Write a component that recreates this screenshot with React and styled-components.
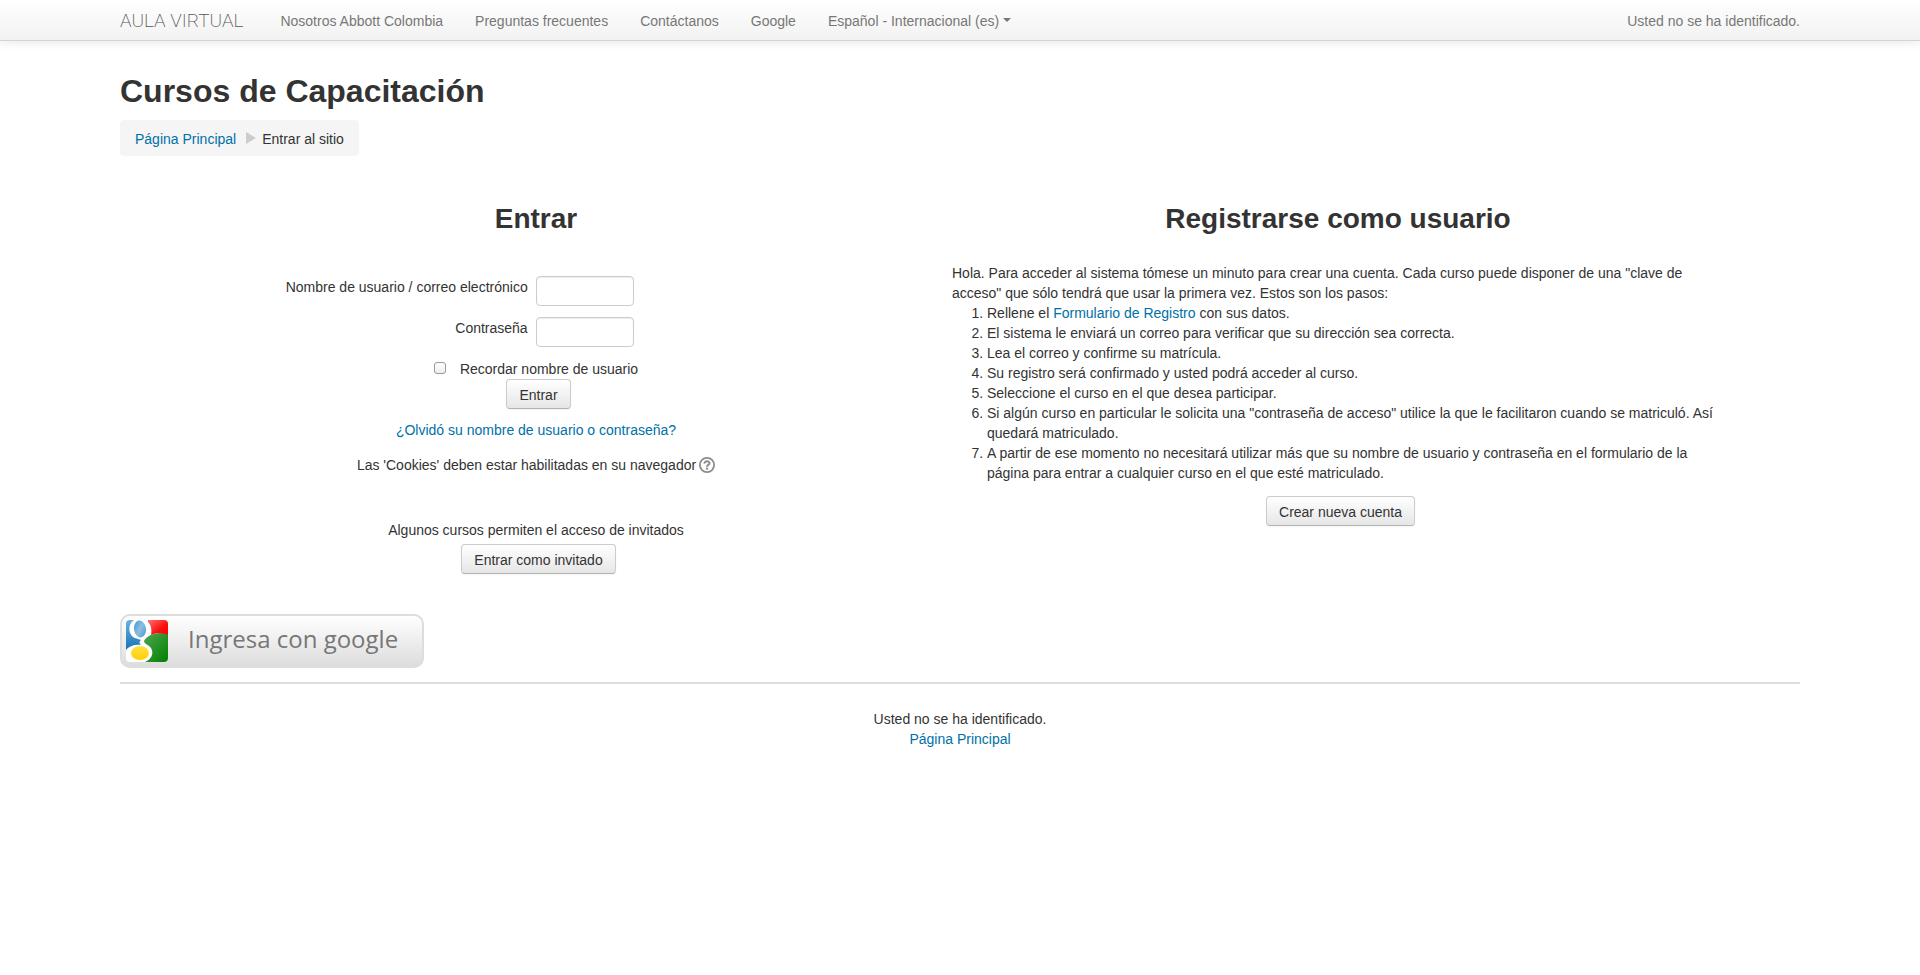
import React from "react";
import styled, { createGlobalStyle } from "styled-components";

const GlobalStyle = createGlobalStyle`
  *, *::before, *::after { box-sizing: border-box; }
  body {
    margin: 0;
    background: #fff;
    color: #333;
    font: 14px/20px "Liberation Sans", Arial, sans-serif;
  }
`;

const Navbar = styled.header`
  padding: 1px 120px 0;
  background: linear-gradient(#fff, #f2f2f2);
  border-bottom: 1px solid #d4d4d4;
  box-shadow: 0 1px 10px rgba(0, 0, 0, 0.1);
  display: flex;
  justify-content: space-between;
  align-items: center;
  height: 41px;
  color: #777;
`;

const NavGroup = styled.nav`
  display: flex;
  align-items: center;
  gap: 2px;
`;

const Brand = styled.a`
  margin-right: 20px;
  color: #555;
  font-family: Roboto, sans-serif;
  font-size: 19px;
  font-weight: 200;
  text-decoration: none;
`;

const NavLink = styled.a`
  padding: 10px 15px;
  color: #777;
  text-decoration: none;
`;

const Caret = styled.span`
  display: inline-block;
  margin-left: 4px;
  vertical-align: middle;
  border-top: 4px solid #777;
  border-left: 4px solid transparent;
  border-right: 4px solid transparent;
  margin-bottom: 4px;
`;

const Page = styled.div`
  padding: 30px 120px 40px;
`;

const SiteTitle = styled.h1`
  margin: 0 0 9px;
  font-size: 32px;
  line-height: 40px;
`;

const Link = styled.a`
  color: #0070a8;
  text-decoration: none;
`;

const Breadcrumb = styled.nav`
  display: inline-flex;
  align-items: center;
  padding: 9px 15px 7px;
  background: #f5f5f5;
  border-radius: 4px;
`;

const Separator = styled.span`
  margin: 0 6px 2px 10px;
  border-left: 10px solid #ccc;
  border-top: 6px solid transparent;
  border-bottom: 6px solid transparent;
`;

const Columns = styled.main`
  display: grid;
  grid-template-columns: 832fr 772fr 76fr;
  margin-top: 43px;
`;

const Panel = styled.section`
  display: flex;
  flex-direction: column;
  align-items: ${(p) => (p.$align === "start" ? "stretch" : "center")};
`;

const PanelTitle = styled.h2`
  margin: 0;
  font-size: 28px;
  line-height: 40px;
  text-align: center;
`;

const LoginForm = styled.form`
  display: flex;
  flex-direction: column;
  align-items: center;
  align-self: stretch;
  margin-top: 37px;
`;

const Field = styled.div`
  display: grid;
  grid-template-columns: 49% 98px;
  column-gap: 8px;
  align-self: stretch;
  margin-bottom: 11px;
  text-align: right;
`;

const FieldLabel = styled.label`
  padding-top: 1px;
`;

const TextInput = styled.input`
  width: 100%;
  height: 30px;
  padding: 4px 6px;
  border: 1px solid #ccc;
  border-radius: 4px;
  background: #fff;
  box-shadow: inset 0 1px 1px rgba(0, 0, 0, 0.075);
  font: inherit;
`;

const Remember = styled.label`
  display: flex;
  align-items: center;
  gap: 14px;
  margin-top: 1px;
`;

const Checkbox = styled.input`
  appearance: none;
  width: 12px;
  height: 12px;
  margin: 0 0 2px;
  border: 1px solid #999;
  border-radius: 3px;
  background: linear-gradient(#fff, #eee);
`;

const Button = styled.button`
  align-self: center;
  height: 30px;
  margin: ${(p) => p.$top || 0}px 0 0 5px;
  padding: 1px 12px 0;
  border: 1px solid #ccc;
  border-bottom-color: #b3b3b3;
  border-radius: 4px;
  background: linear-gradient(#fff, #e6e6e6);
  box-shadow: inset 0 1px 0 rgba(255, 255, 255, 0.2), 0 1px 2px rgba(0, 0, 0, 0.05);
  color: #333;
  font: inherit;
`;

const Forgot = styled(Link)`
  margin-top: 11px;
`;

const Cookies = styled.div`
  display: flex;
  align-items: center;
  gap: 3px;
  margin-top: 15px;
`;

const HelpButton = styled.button`
  display: flex;
  padding: 0;
  border: 0;
  background: none;
`;

const GuestForm = styled.form`
  display: flex;
  flex-direction: column;
  align-items: center;
  margin-top: 45px;
`;

const Instructions = styled.div`
  margin-top: 24px;
`;

const Steps = styled.ol`
  margin: 0;
  padding-left: 35px;
`;

const GoogleButton = styled.button`
  display: flex;
  align-items: center;
  height: 54px;
  margin-top: 40px;
  padding: 0 24px 0 4px;
  border: 2px solid #ddd;
  border-radius: 10px;
  background: linear-gradient(#fff, #ddd);
  color: #777;
  font: 24px/32px "Open Sans", sans-serif;
  gap: 20px;
`;

const GoogleLabel = styled.span`
  padding-bottom: 4px;
`;

const Footer = styled.footer`
  margin-top: 14px;
  padding-top: 25px;
  border-top: 2px solid #ddd;
  text-align: center;
`;

function HelpIcon() {
  return (
    <svg width="16" height="16" viewBox="0 0 16 16" fill="none" stroke="#8c8c8c" aria-hidden="true">
      <circle cx="8" cy="8" r="7.1" strokeWidth="1.8" />
      <path d="M5.5 6.6C5.3 3.6 10.6 3.6 10.5 6.3C10.5 8 8 7.800 8 9.700" strokeWidth="2" />
      <path d="M8 10.600V12.600" strokeWidth="2.2" />
    </svg>
  );
}

function GoogleIcon() {
  return (
    <svg width="42" height="42" viewBox="0 0 42 42" aria-hidden="true">
      <defs>
        <linearGradient id="blue" x1="0" y1="0" x2="0" y2="1">
          <stop offset="0" stopColor="#6fb0dc" />
          <stop offset="1" stopColor="#1673b8" />
        </linearGradient>
        <linearGradient id="blueLight" x1="0" y1="0" x2="1" y2="1">
          <stop offset="0" stopColor="#3d8fc8" />
          <stop offset="0.5" stopColor="#8cc0e4" />
          <stop offset="1" stopColor="#4393ca" />
        </linearGradient>
        <linearGradient id="red" x1="0" y1="0" x2="1" y2="1">
          <stop offset="0" stopColor="#ff7070" />
          <stop offset="0.6" stopColor="#fb0d0d" />
          <stop offset="1" stopColor="#f00" />
        </linearGradient>
        <linearGradient id="green" x1="0" y1="0" x2="1" y2="1">
          <stop offset="0" stopColor="#4fa54f" />
          <stop offset="1" stopColor="#008000" />
        </linearGradient>
        <linearGradient id="yellow" x1="0" y1="0" x2="0" y2="1">
          <stop offset="0" stopColor="#ffe14a" />
          <stop offset="1" stopColor="#ffcf00" />
        </linearGradient>
        <clipPath id="tile"><rect width="42" height="42" rx="4" /></clipPath>
      </defs>
      <g clipPath="url(#tile)">
        <rect width="42" height="42" fill="#fff" />
        <path d="M0 0H8C2 4 2 13 7 17C10 19 14 19 15 20C13 22 13 23 15 25C9 24 3 26 0 30Z" fill="url(#blue)" />
        <path d="M22 0H42V16C36 13 30 13 25 15C26 9 25 5 22 2Z" fill="url(#red)" />
        <path d="M18 21C20 17 25 14 31 13.5C36 13 40 14 42 15V42H19C26 39 28 33 25 28C23 25 18 24 18 21Z" fill="url(#green)" />
        <ellipse cx="14" cy="9" rx="6" ry="8.5" fill="url(#blueLight)" transform="rotate(-8 14 9)" />
        <ellipse cx="14" cy="33" rx="9" ry="7" fill="url(#yellow)" />
      </g>
    </svg>
  );
}

const links = ["Nosotros Abbott Colombia", "Preguntas frecuentes", "Contáctanos", "Google"];

export default function App() {
  return (
    <>
      <GlobalStyle />
      <Navbar>
        <NavGroup>
          <Brand href="#">AULA VIRTUAL</Brand>
          {links.map((text) => (
            <NavLink href="#" key={text}>{text}</NavLink>
          ))}
          <NavLink href="#">Español - Internacional (es)<Caret /></NavLink>
        </NavGroup>
        <span>Usted no se ha identificado.</span>
      </Navbar>
      <Page>
        <SiteTitle>Cursos de Capacitación</SiteTitle>
        <Breadcrumb>
          <Link href="#">Página Principal</Link>
          <Separator />
          <span>Entrar al sitio</span>
        </Breadcrumb>
        <Columns>
          <Panel>
            <PanelTitle>Entrar</PanelTitle>
            <LoginForm onSubmit={(e) => e.preventDefault()}>
              <Field>
                <FieldLabel htmlFor="username">Nombre de usuario / correo electrónico</FieldLabel>
                <TextInput id="username" type="text" />
              </Field>
              <Field>
                <FieldLabel htmlFor="password">Contraseña</FieldLabel>
                <TextInput id="password" type="password" />
              </Field>
              <Remember>
                <Checkbox type="checkbox" />
                Recordar nombre de usuario
              </Remember>
              <Button type="submit">Entrar</Button>
            </LoginForm>
            <Forgot href="#">¿Olvidó su nombre de usuario o contraseña?</Forgot>
            <Cookies>
              Las 'Cookies' deben estar habilitadas en su navegador
              <HelpButton type="button" aria-label="Ayuda"><HelpIcon /></HelpButton>
            </Cookies>
            <GuestForm onSubmit={(e) => e.preventDefault()}>
              Algunos cursos permiten el acceso de invitados
              <Button type="submit" $top={4}>Entrar como invitado</Button>
            </GuestForm>
          </Panel>
          <Panel $align="start">
            <PanelTitle>Registrarse como usuario</PanelTitle>
            <Instructions>
              Hola. Para acceder al sistema tómese un minuto para crear una cuenta. Cada curso puede
              disponer de una "clave de acceso" que sólo tendrá que usar la primera vez. Estos son
              los pasos:
              <Steps>
                <li>Rellene el <Link href="#">Formulario de Registro</Link> con sus datos.</li>
                <li>El sistema le enviará un correo para verificar que su dirección sea correcta.</li>
                <li>Lea el correo y confirme su matrícula.</li>
                <li>Su registro será confirmado y usted podrá acceder al curso.</li>
                <li>Seleccione el curso en el que desea participar.</li>
                <li>Si algún curso en particular le solicita una "contraseña de acceso" utilice la que le facilitaron cuando se matriculó. Así quedará matriculado.</li>
                <li>A partir de ese momento no necesitará utilizar más que su nombre de usuario y contraseña en el formulario de la página para entrar a cualquier curso en el que esté matriculado.</li>
              </Steps>
            </Instructions>
            <Button type="button" $top={13}>Crear nueva cuenta</Button>
          </Panel>
        </Columns>
        <GoogleButton type="button">
          <GoogleIcon />
          <GoogleLabel>Ingresa con google</GoogleLabel>
        </GoogleButton>
        <Footer>
          <div>Usted no se ha identificado.</div>
          <Link href="#">Página Principal</Link>
        </Footer>
      </Page>
    </>
  );
}
